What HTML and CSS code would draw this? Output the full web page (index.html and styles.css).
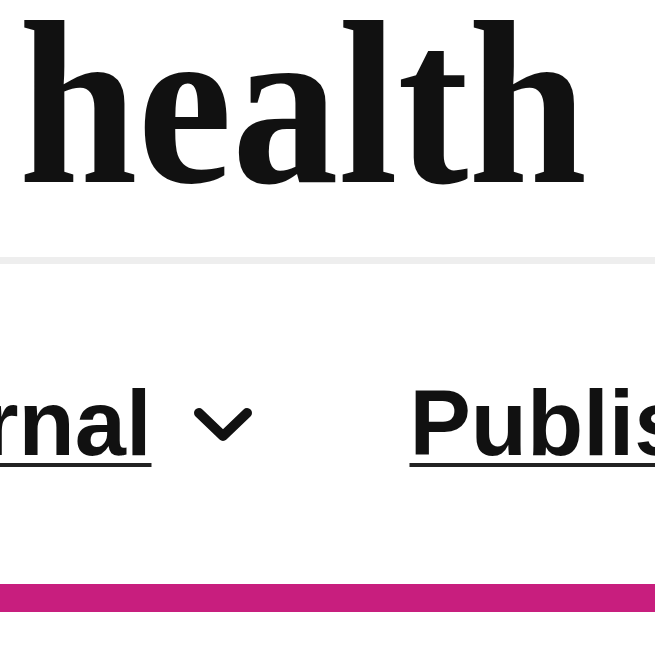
FILE: index.html
```html
<!DOCTYPE html>
<html lang="en">
<head>
<meta charset="utf-8">
<title>health</title>
<link rel="stylesheet" href="styles.css">
</head>
<body>
<header class="masthead">
  <div class="logo">health</div>
</header>
<nav class="nav">
  <a class="nav-link" href="#">About the journal</a>
  <svg class="chevron" viewBox="0 0 60 36" aria-hidden="true"><polyline points="6,6 30,29 54,6"/></svg>
  <a class="nav-link nav-link-publish" href="#">Publish with us</a>
</nav>
<div class="accent-bar"></div>
</body>
</html>
```

FILE: styles.css
```css
html, body {
  margin: 0;
  padding: 0;
  background: #ffffff;
  overflow: hidden;
}

.masthead {
  padding: 3px 0 54px 19px;
  border-bottom: 7px solid #eeeeee;
}

.logo {
  display: inline-block;
  font-family: "Liberation Serif", "Times New Roman", serif;
  font-weight: 700;
  font-size: 234px;
  line-height: 200px;
  color: #111111;
  transform: scaleX(0.91);
  transform-origin: left center;
  white-space: nowrap;
}

.nav {
  display: flex;
  align-items: flex-start;
  padding: 109px 0 111px 0;
  margin-left: -610px;
  white-space: nowrap;
}

.nav-link {
  font-family: "Liberation Sans", Arial, sans-serif;
  font-weight: 700;
  font-size: 92px;
  line-height: 100px;
  color: #111111;
  text-decoration: underline;
  text-decoration-thickness: 4px;
  text-underline-offset: 8px;
  text-decoration-color: #222222;
}

.chevron {
  width: 60px;
  height: 36px;
  margin: 34px 0 0 42px;
  flex: none;
}

.chevron polyline {
  fill: none;
  stroke: #111111;
  stroke-width: 10;
  stroke-linecap: round;
  stroke-linejoin: round;
}

.nav-link-publish {
  margin-left: 156px;
}

.accent-bar {
  height: 28px;
  background: #c81e7e;
}
```
